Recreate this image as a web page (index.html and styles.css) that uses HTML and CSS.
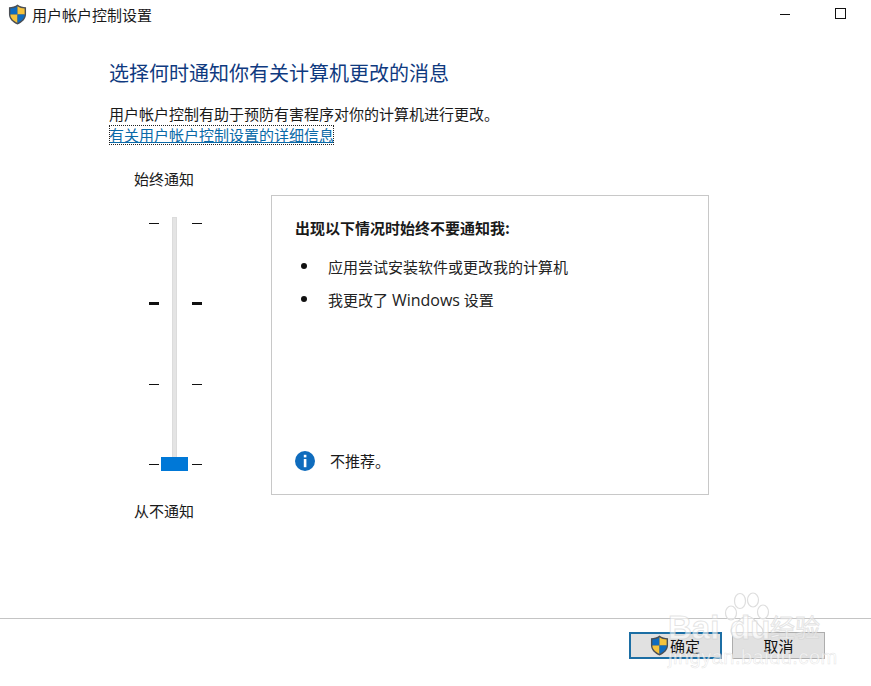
FILE: index.html
```html
<!DOCTYPE html>
<html lang="zh-CN">
<head>
<meta charset="utf-8">
<title>用户帐户控制设置</title>
<link rel="stylesheet" href="styles.css">
</head>
<body>
<svg class="defs" width="0" height="0" aria-hidden="true">
  <symbol id="shield" viewBox="0 0 20 22">
    <path d="M10 0.500 C7.500 2.500 4.500 3.300 1 3.300 L1 11 C1 15.500 5 19.500 10 21.500 C15 19.500 19 15.500 19 11 L19 3.300 C15.500 3.300 12.500 2.500 10 0.500 Z" fill="#4a4f55"/>
    <path d="M10 2.200 C7.800 3.800 5.300 4.500 2.500 4.600 L2.500 11 L10 11 Z" fill="#0f6cc0"/>
    <path d="M10 2.200 C12.200 3.800 14.700 4.500 17.500 4.600 L17.500 11 L10 11 Z" fill="#f6c33c"/>
    <path d="M2.500 11 L10 11 L10 19.800 C6 18 2.500 15 2.500 11 Z" fill="#f6c33c"/>
    <path d="M17.500 11 L10 11 L10 19.800 C14 18 17.500 15 17.500 11 Z" fill="#0f6cc0"/>
  </symbol>
</svg>
<div class="window">
  <header class="titlebar">
    <svg class="shield"><use href="#shield"/></svg>
    <span class="title">用户帐户控制设置</span>
    <span class="win-min"></span>
    <span class="win-max"></span>
  </header>
  <main class="content">
    <h1 class="heading">选择何时通知你有关计算机更改的消息</h1>
    <p class="intro">用户帐户控制有助于预防有害程序对你的计算机进行更改。</p>
    <p class="link-row"><a class="link" href="#">有关用户帐户控制设置的详细信息</a></p>
    <div class="panel">
      <div class="slider-col">
        <div class="slider-label">始终通知</div>
        <div class="slider">
          <div class="track"></div>
          <div class="thumb"></div>
          <div class="tick-row"><i class="tick"></i><i class="tick"></i></div>
          <div class="tick-row"><i class="tick bold"></i><i class="tick bold"></i></div>
          <div class="tick-row"><i class="tick"></i><i class="tick"></i></div>
          <div class="tick-row"><i class="tick"></i><i class="tick"></i></div>
        </div>
        <div class="slider-label bottom">从不通知</div>
      </div>
      <section class="info">
        <h2 class="info-title">出现以下情况时始终不要通知我:</h2>
        <ul class="info-list">
          <li>应用尝试安装软件或更改我的计算机</li>
          <li>我更改了 <span class="latin">Windows</span> 设置</li>
        </ul>
        <div class="note">
          <svg class="note-icon" viewBox="0 0 20 20">
            <circle cx="10" cy="10" r="10" fill="#0f6cbd"/>
            <rect x="8.800" y="3.800" width="2.600" height="2.600" fill="#fff"/>
            <rect x="8.800" y="8" width="2.600" height="8.200" fill="#fff"/>
          </svg>
          <span>不推荐。</span>
        </div>
      </section>
    </div>
  </main>
  <footer class="footer">
    <button class="btn primary" type="button"><svg class="btn-shield"><use href="#shield"/></svg><span>确定</span></button>
    <button class="btn" type="button">取消</button>
  </footer>
</div>
<div class="watermark" aria-hidden="true">
  <svg class="paw" viewBox="0 0 50 48">
    <g fill="rgba(255,255,255,0.5)" stroke="#dedede" stroke-width="1.200">
      <ellipse cx="9" cy="21" rx="5.500" ry="7"/>
      <ellipse cx="18" cy="9" rx="5.500" ry="7.500"/>
      <ellipse cx="31" cy="8" rx="5.500" ry="7"/>
      <ellipse cx="41" cy="20" rx="5.500" ry="7"/>
      <path d="M25 24 C18 24 16 31 11 35 C7 39 10 46 17 45 C21 44 29 44 33 45 C40 46 43 39 39 35 C34 31 32 24 25 24 Z"/>
    </g>
  </svg>
  <span class="wm-bai">Bai</span>
  <span class="wm-du">du</span>
  <span class="wm-cn">经验</span>
  <span class="wm-url">jingyan.baidu.com</span>
</div>
</body>
</html>
```
FILE: styles.css
```css
* { box-sizing: border-box; }
html, body { margin: 0; padding: 0; background: #fff; overflow: hidden; }
body {
  position: relative;
  width: 871px;
  height: 686px;
  font-family: "Noto Sans CJK SC", "Noto Sans", sans-serif;
  font-size: 15px;
  color: #1a1a1a;
}
.defs { position: absolute; }
.window { width: 871px; height: 686px; display: flex; flex-direction: column; }

.titlebar { height: 32px; display: flex; align-items: center; padding-left: 8px; flex: none; }
.shield { width: 19px; height: 21px; margin-top: -3px; }
.title { margin-left: 5px; line-height: 20px; margin-top: -2px; }
.win-min { width: 10px; height: 1px; background: #111; margin-left: 628px; margin-top: -3px; }
.win-max { width: 11px; height: 11px; border: 1px solid #111; margin-left: 45px; margin-top: -5px; }

.content { flex: 1; padding-left: 109px; }
.heading { margin: 27px 0 0; font-size: 20px; font-weight: 400; line-height: 28px; color: #0f3a80; }
.intro { margin: 17px 0 0; line-height: 20px; }
.link-row { margin: 1px 0 0; line-height: 20px; }
.link { color: #0a6aa8; text-decoration: underline; outline: 1px dotted #222; outline-offset: -1px; display: inline-block; height: 20px; }

.panel { display: flex; margin-top: 24px; }
.slider-col { width: 162px; flex: none; padding-left: 25px; }
.slider-label { line-height: 20px; }
.slider-label.bottom { margin-top: 29px; }
.slider {
  position: relative;
  width: 53px;
  height: 255px;
  margin: 28px 0 0 15px;
  padding-top: 5px;
  display: flex;
  flex-direction: column;
  gap: 77.3px;
}
.track {
  position: absolute;
  left: 23px;
  top: 0;
  width: 5px;
  height: 253px;
  background: #e4e4e4;
  border: 1px solid #dcdcdc;
}
.thumb {
  position: absolute;
  left: 12px;
  top: 240px;
  width: 27px;
  height: 14px;
  background: #0078d7;
}
.tick-row { display: flex; justify-content: space-between; align-items: center; height: 3px; }
.tick { display: block; width: 10px; height: 1px; background: #111; }
.tick.bold { height: 3px; }

.info {
  position: relative;
  width: 438px;
  height: 300px;
  margin-top: 26px;
  border: 1px solid #c8c8c8;
  padding: 22px 23px 0;
  display: flex;
  flex-direction: column;
}
.info-title { margin: 0; font-size: 15px; font-weight: 700; line-height: 20px; }
.info-list { list-style: none; margin: 19px 0 0; padding: 0; }
.info-list li { position: relative; padding-left: 33px; line-height: 20px; margin-bottom: 13px; color: #222; font-family: "Open Sans", "Noto Sans CJK SC", sans-serif; }
.info-list li::before {
  content: "";
  position: absolute;
  left: 6px;
  top: 6px;
  width: 6px;
  height: 6px;
  border-radius: 50%;
  background: #111;
}
.latin { font-size: 16px; }
.note { margin-top: auto; margin-bottom: 23px; display: flex; align-items: center; gap: 15px; line-height: 20px; }
.note-icon { width: 20px; height: 20px; }

.footer {
  flex: none;
  height: 68px;
  border-top: 1px solid #c4c4c4;
  display: flex;
  gap: 10px;
  padding: 13px 0 0 629px;
}
.btn {
  width: 93px;
  height: 27px;
  padding: 0;
  background: #e1e1e1;
  border: 1px solid #adadad;
  font: inherit;
  font-size: 15px;
  line-height: 20px;
  color: #111;
  display: flex;
  align-items: center;
  justify-content: center;
}
.btn.primary { border: 2px solid #1c6ea4; justify-content: flex-start; padding-left: 19px; }
.btn-shield { width: 19px; height: 21px; margin-right: 1px; }

.watermark { position: absolute; left: 0; top: 0; width: 871px; height: 686px; pointer-events: none; color: rgba(255, 255, 255, 0.6); }
.watermark span { position: absolute; font-family: "Liberation Sans", sans-serif; -webkit-text-stroke: 1px rgba(205, 205, 205, 0.55); white-space: nowrap; }
.paw { position: absolute; left: 722px; top: 592px; width: 50px; height: 48px; }
.wm-bai { left: 668px; top: 610px; font-size: 33px; line-height: 36px; font-weight: 700; }
.wm-du { left: 730px; top: 610px; font-size: 33px; line-height: 36px; font-weight: 700; }
.wm-cn { left: 770px; top: 612px; font-size: 25px; line-height: 32px; }
.wm-url { left: 668px; top: 645px; font-size: 20px; line-height: 24px; letter-spacing: 0.5px; -webkit-text-stroke-width: 0.5px !important; }
```
